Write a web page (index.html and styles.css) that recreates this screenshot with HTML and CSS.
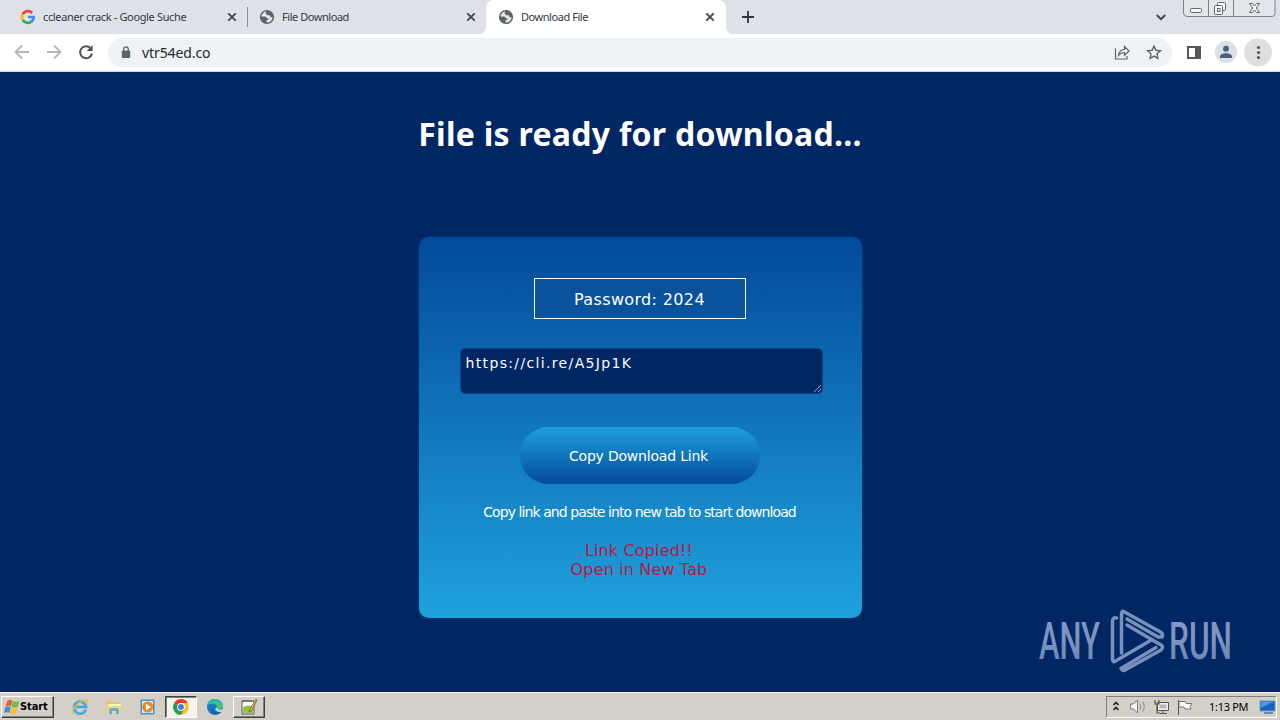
FILE: index.html
```html
<!DOCTYPE html>
<html lang="en">
<head>
<meta charset="utf-8">
<title>Download File</title>
<link rel="stylesheet" href="styles.css">
</head>
<body>
<svg class="defs" width="0" height="0">
  <symbol id="globe" viewBox="0 0 16 16"><circle cx="8" cy="8" r="7.1" fill="#5f6368"/><path d="M7.2 2.2C4.6 3 2.7 5 2.4 7.4l3.1.2c1.6 0 2.4.8 2.4 2h1.5v1.500H7.600v2.400c3.200.2 5.700-2 6-5l-2.100-.6-.8-1.600H8.300L6.600 4.600z" fill="#e4e7eb"/></symbol>
  <symbol id="cross" viewBox="0 0 10 10"><path d="M1.300 1.300l7.400 7.400M8.700 1.300L1.300 8.700" stroke="#45494e" stroke-width="1.900"/></symbol>
</svg>
<div class="tabs">
  <div class="tab">
    <svg class="fav" viewBox="0 0 16 16" fill="none" stroke-width="2.700"><path d="M2.800 5.200A5.800 5.800 0 0 1 12.200 4" stroke="#ea4335"/><path d="M2.800 5.200a5.800 5.800 0 0 0 0 5.600" stroke="#fbbc05"/><path d="M2.800 10.800a5.800 5.800 0 0 0 9 1.500" stroke="#34a853"/><path d="M11.700 12.400c1.400-1.100 2-2.700 1.900-4.400H8" stroke="#4285f4"/></svg>
    <span class="title t1">ccleaner crack - Google Suche</span><svg class="close"><use href="#cross"/></svg>
  </div>
  <div class="tab split"><svg class="fav"><use href="#globe"/></svg><span class="title t2">File Download</span><svg class="close"><use href="#cross"/></svg></div>
  <div class="tab active"><svg class="fav"><use href="#globe"/></svg><span class="title t3">Download File</span><svg class="close"><use href="#cross"/></svg></div>
  <svg class="plus" viewBox="0 0 12 12"><path d="M6 0v12M0 6h12" stroke="#30343b" stroke-width="1.800"/></svg>
  <svg class="chev" viewBox="0 0 10 7"><path d="M.8 1L5 5.200 9.200 1" fill="none" stroke="#3c4043" stroke-width="1.800"/></svg>
  <svg class="winctl" viewBox="0 0 94 18"><path d="M.5 0v13q0 3.500 3.500 3.500h85q3 0 3-3V0M25.500 0v16M50.500 0v16" fill="#e3e6eb" stroke="#7d818a"/><g fill="#f4f6f8" stroke="#626670"><rect x="7.500" y="8.500" width="11" height="4" rx="1"/><rect x="34.500" y="2.500" width="8" height="8" rx="1"/><rect x="31.500" y="5.500" width="8" height="9" rx="1"/><rect x="34.500" y="8.500" width="2.500" height="3"/><path d="M66.500 3.500h3l2 2.500 2-2.500h3l-3.200 4.500 3.200 4.500h-3l-2-2.500-2 2.500h-3l3.200-4.500z"/></g></svg>
</div>
<div class="toolbar">
  <svg class="nav" viewBox="0 0 100 37" fill="none"><path d="M29 18H16M22 11.500L15.500 18l6.500 6.500M47 18h13M54 11.500l6.500 6.500-6.500 6.500" stroke="#b4b7bb" stroke-width="1.800"/><path d="M90.700 14.300A6 6 0 1 0 92 19.500" stroke="#505459" stroke-width="2"/><path d="M92.600 11v6h-6z" fill="#505459"/></svg>
  <div class="address">
    <svg class="lock" viewBox="0 0 10 13"><rect x=".8" y="4.500" width="8.400" height="7.500" rx="1" fill="#5f6368"/><path d="M2.700 5V3.200a2.300 2.300 0 0 1 4.600 0V5" fill="none" stroke="#5f6368" stroke-width="1.300"/></svg>
    <span class="url">vtr54ed.co</span>
    <svg class="actions" viewBox="0 0 60 29" fill="none" stroke="#5f6368" stroke-width="1.200"><path d="M3.500 10.500v10.500h11.500v-3"/><path d="M6.500 17.500c.5-4 2.500-5.800 6-6V8.500l4.500 4.500-4.500 4.300v-2.800c-2.500 0-4.300.8-6 3z"/><path d="M42 8.200l1.900 4.100 4.500.5-3.400 3 .9 4.500-3.900-2.200-3.900 2.200.9-4.500-3.400-3 4.500-.5z" stroke-width="1.400"/></svg>
  </div>
  <svg class="tools" viewBox="0 0 108 37"><path d="M16 13h11v11H16z" fill="none" stroke="#55595e" stroke-width="2"/><path d="M23 12h6v13h-6z" fill="#55595e"/><circle cx="54" cy="18" r="11" fill="#dce1e7"/><circle cx="54" cy="14.800" r="3" fill="#4d5f7e"/><path d="M48 24v-1.500c0-4.500 12-4.500 12 0V24z" fill="#4d5f7e"/><circle cx="86" cy="18.500" r="14" fill="#dfdfe0"/><g fill="#53575c"><circle cx="86.500" cy="13.500" r="1.600"/><circle cx="86.500" cy="18.500" r="1.600"/><circle cx="86.500" cy="23.500" r="1.600"/></g></svg>
</div>
<main class="page">
  <h1><span class="h">File is ready for download...</span></h1>
  <section class="card">
    <div class="password">Password: 2024</div>
    <div class="linkbox">https://cli.re/A5Jp1K<svg class="grip" viewBox="0 0 8 8"><path d="M1 8L8 1M5 8L8 5" stroke="#aeb9cf" stroke-width=".9"/></svg></div>
    <button class="copy">Copy Download Link</button>
    <p class="hint">Copy link and paste into new tab to start download</p>
    <p class="copied"><span class="c1">Link Copied!!</span><span class="c2">Open in New Tab</span></p>
  </section>
  <svg class="mark" viewBox="0 0 200 70">
    <defs><linearGradient id="mg" x1="0" y1="0" x2="0" y2="1"><stop offset="0" stop-color="#8199c4"/><stop offset=".5" stop-color="#7c94be"/><stop offset="1" stop-color="#647fae"/></linearGradient></defs>
    <g fill="url(#mg)"><text x="4" y="54" textLength="61" lengthAdjust="spacingAndGlyphs">ANY</text><text x="134" y="54" textLength="63" lengthAdjust="spacingAndGlyphs">RUN</text></g>
    <g fill="none" stroke="#7890bb" stroke-width="3.500" stroke-linecap="round" stroke-linejoin="round"><path d="M86.500 48V9q0-4 3-2l36 20q3 2 1.500 5l-4 0L92 14"/><path d="M81.500 13q-4-1-4 4v37q0 4 3 2l35-20.500"/><path d="M92 20l34 20q3 2 0 5L91 64.500q-3 2-5-1l35-21"/></g>
  </svg>
</main>
<footer class="taskbar">
  <div class="start"><svg viewBox="0 0 16 16"><path d="M3.500 1.500q3-1.500 5 0L7 7.500q-2.500-1.500-5.500 0z" fill="#e8662b"/><path d="M9 2q3 1.500 6.500 0l-1.800 6q-3 1.300-6 0z" fill="#76b84a"/><path d="M1.300 8.200q2.500-1.500 5.500 0l-1.500 5.800q-2.500-1.500-5.300 0z" fill="#3d8fd6"/><path d="M7.500 8.700q3 1.300 6 0l-1.700 6q-3 1.300-5.900 0z" fill="#f5bd30"/></svg><span>Start</span></div>
  <div class="quick">
    <svg viewBox="0 0 18 18" fill="none"><path d="M14.800 11.500A6 6 0 1 1 15 8.800H5" stroke="#45a9e0" stroke-width="2.700"/><path d="M2 15.500C-1 12 10 1 16 2c1 .3.800 2-.3 3.500" stroke="#e6bd45" stroke-width="1.500"/></svg>
    <svg viewBox="0 0 18 18"><path d="M1.500 3h6l1.500 2h7v10h-14.500z" fill="#e7c566"/><path d="M3 6h13v3H3z" fill="#fff4b8"/><path d="M2 8h14v7H2z" fill="#f1d77e"/><path d="M4 16v-4q0-2 2-2h6q2 0 2 2v4h-3v-3H7v3z" fill="#68aed3"/></svg>
    <svg viewBox="0 0 18 18"><rect x="1.500" y="1.500" width="14" height="15" fill="#4b92cb"/><rect x="3" y="3" width="11" height="12" fill="#d8ecf5"/><circle cx="8.700" cy="9" r="5.500" fill="#ef881f"/><path d="M7 5.700L12 9l-5 3.300z" fill="#fff"/></svg>
  </div>
  <div class="task pressed"><svg viewBox="0 0 18 18"><circle cx="9" cy="9" r="7.800" fill="#fbc116"/><path d="M9 9L2.200 5.100A7.800 7.800 0 0 1 15.800 5.100H9z" fill="#e33b2e"/><path d="M2.200 5.100A7.800 7.800 0 0 0 9 16.800l3.300-5.900L9 9z" fill="#279b50"/><circle cx="9" cy="9" r="3.900" fill="#fff"/><circle cx="9" cy="9" r="2.900" fill="#3c7de0"/></svg></div>
  <div class="edge"><svg viewBox="0 0 18 18"><circle cx="9" cy="9" r="8" fill="#1679c5"/><path d="M1.500 7C3-1 16-1 17 8c0 4-5 4.500-6.500 3 3-4-3-7-9-4z" fill="#4bc36f"/><path d="M1.500 7C2 2 6 .8 9 1c5 0 8 4 7.500 7C14 2 6 3 1.500 7z" fill="#27b7c8"/><path d="M7 8c-2 5 3 8 8 6-5 5-12 0-8-6z" fill="#145795"/><path d="M10.800 9c0 3 4 3.500 7.200 1.500l-1.500 3.200C12 15 7 12 10.800 9z" fill="#d4d0c8"/></svg></div>
  <div class="task"><svg viewBox="0 0 18 18"><path d="M2 3h12v13H2z" fill="#fff" stroke="#555"/><path d="M3 9q5-3 10 0v6H3z" fill="#91c63e"/><path d="M3 2v2M5 2v2M7 2v2M9 2v2M11 2v2" stroke="#444" stroke-width=".8"/><path d="M16 1l-6 10-1 3 3-2 5-10z" fill="#ecc052" stroke="#704c20" stroke-width=".7"/></svg></div>
  <div class="tray">
    <svg viewBox="0 0 95 21" fill="none"><path d="M6.500 9L9 6.500 11.500 9M6.500 14L9 11.500l2.500 2.500" stroke="#222" stroke-width="1.700"/><path d="M23.500 8h3l4-4v13l-4-4h-3z" fill="#f5f5f5" stroke="#777"/><path d="M33 7.500q2 3 0 6M35.500 5.500q3.500 5 0 10" stroke="#888"/><path d="M50.500 6.500h11v8h-11zM53 17.500h7M56 15v2" fill="#eee" stroke="#555"/><path d="M52.500 8.500h7v4h-7z" fill="#b9b9b5"/><path d="M48 4v4h4V4M50 8v9h3" stroke="#555" stroke-width="1.200"/><path d="M71.500 4v15" stroke="#555"/><path d="M72 5.500h6l1 2h6l-2 3 1 2.500h-6l-1-2h-5z" fill="#fafafa" stroke="#777"/></svg>
    <span class="clock">1:13 PM</span>
    <svg class="desk" viewBox="0 0 17 16"><path d="M1 2h15v10H1z" fill="#1763bc" stroke="#739bc9"/><path d="M2 3h12L2 9z" fill="#4b96df"/><path d="M5 14h9" stroke="#6388b3" stroke-width="2"/></svg>
  </div>
</footer>
</body>
</html>
```
FILE: styles.css
```css
* { box-sizing: border-box; }
body { margin: 0; width: 1280px; height: 720px; overflow: hidden; display: flex; flex-direction: column; font-family: "DejaVu Sans", sans-serif; background: #002664; }
svg { display: block; flex: none; }
.defs { position: absolute; }
.tabs { height: 34px; flex: none; background: #dee1e8; display: flex; align-items: flex-start; padding-left: 8px; }
.tab { width: 239px; height: 34px; display: flex; align-items: center; padding: 0 10px 0 12px; position: relative; }
.tab.split::before { content: ""; width: 1px; height: 20px; background: #8c9098; position: absolute; left: 0; top: 7px; }
.tab.active { width: 240px; background: #fff; border-radius: 8px 8px 0 0; padding-right: 11px; }
.tab.active::before, .tab.active::after { content: ""; position: absolute; bottom: 0; width: 6px; height: 6px; }
.tab.active::before { left: -6px; background: radial-gradient(circle at 0 0, transparent 5.5px, #fff 6px); }
.tab.active::after { right: -6px; background: radial-gradient(circle at 100% 0, transparent 5.5px, #fff 6px); }
.fav { width: 16px; height: 16px; }
.title { margin-left: 7px; padding-bottom: 2px; flex: 1; white-space: nowrap; font: 11px "Noto Sans", sans-serif; color: #35393e; }
.t1 { letter-spacing: -.35px; }
.t2, .t3 { letter-spacing: -.45px; }
.close { width: 10px; height: 10px; }
.plus { width: 12px; height: 12px; margin: 11px 0 0 16px; }
.chev { width: 10px; height: 7px; margin: 14px 17px 0 auto; }
.winctl { width: 94px; height: 18px; margin-right: 3px; }
.toolbar { height: 38px; flex: none; background: #fff; display: flex; border-bottom: 1px solid #cfd7e4; }
.nav { width: 100px; height: 37px; }
.address { width: 1064px; height: 29px; margin: 4px 0 0 8px; border-radius: 15px; background: #eff2f5; display: flex; align-items: center; }
.lock { width: 10px; height: 13px; margin: 0 11px 1px 13px; }
.url { flex: 1; font: 14px "Noto Sans", sans-serif; color: #25282c; letter-spacing: -.1px; }
.actions { width: 60px; height: 29px; }
.tools { width: 108px; height: 37px; }
.page { height: 620px; flex: none; background: #002664; position: relative; display: flex; flex-direction: column; align-items: center; }
h1 { margin: 41px 0 0; height: 124px; width: 442px; color: #fff; font: bold 32px/42px "Noto Sans", sans-serif; letter-spacing: .28px; white-space: nowrap; display: flex; justify-content: center; }
.card { width: 443px; height: 381px; margin-left: 1px; padding: 41px 2px 0 0; border-radius: 10px; background: linear-gradient(#034a9b, #1fa2dc); box-shadow: 0 0 3px #064c8c; display: flex; flex-direction: column; align-items: center; color: #fff; white-space: nowrap; }
.password { width: 212px; height: 41px; border: 1px solid #fff; text-align: center; font-size: 16px; line-height: 41px; letter-spacing: .35px; background: #0b529d; }
.linkbox { width: 363px; height: 46px; margin: 29px 0 0 3px; border: 1px solid #07458d; border-radius: 5px; background: #002664; padding: 5px; font-size: 14px; line-height: 18px; position: relative; letter-spacing: 1.35px; }
.grip { position: absolute; right: 1px; bottom: 1px; width: 8px; height: 8px; }
.copy { width: 240px; height: 57px; margin: 33px 0 0; padding: 0 2px 0 0; border: 0; border-radius: 29px; background: linear-gradient(#1fa0dc, #034a9b); color: #fff; font: 14px "DejaVu Sans", sans-serif; letter-spacing: -.2px; }
.hint { margin: 17px 0 0; font-size: 14px; line-height: 22px; letter-spacing: -.92px; }
.copied { margin: 18px 0 0; padding-right: 1px; color: #bb1640; font-size: 16px; line-height: 19px; letter-spacing: .15px; display: flex; flex-direction: column; align-items: center; }
.mark { position: absolute; left: 1035px; top: 533px; width: 200px; height: 70px; overflow: visible; font: 500 52px Roboto, sans-serif; }
.taskbar { height: 28px; flex: none; background: #d4d0c8; border-top: 1px solid #f5f3ef; display: flex; align-items: center; padding: 0 3px 0 1px; }
.start, .task { border: 1px solid; border-color: #fff #404040 #404040 #fff; box-shadow: inset -1px -1px #808080; }
.start { width: 53px; height: 22px; display: flex; align-items: center; padding-left: 2px; font: bold 11px "DejaVu Sans Condensed", "DejaVu Sans", sans-serif; letter-spacing: -.1px; }
.start svg { width: 16px; height: 16px; }
.quick { display: flex; gap: 16px; margin-left: 17px; width: 94px; }
.quick svg, .task svg, .edge svg { width: 18px; height: 18px; }
.task { width: 32px; height: 22px; display: grid; place-items: center; }
.pressed { border-color: #404040 #fff #fff #404040; box-shadow: inset 1px 1px #808080; background: #f4f3f0; }
.edge { width: 36px; display: flex; justify-content: center; }
.tray { width: 171px; height: 22px; margin-left: auto; border: 1px solid; border-color: #808080 #fff #fff #808080; display: flex; align-items: center; }
.tray svg { width: 95px; height: 21px; }
.clock { width: 57px; padding-left: 7px; white-space: nowrap; font: 11px "Noto Sans", sans-serif; letter-spacing: -.3px; }
.tray .desk { width: 17px; height: 16px; }
```
